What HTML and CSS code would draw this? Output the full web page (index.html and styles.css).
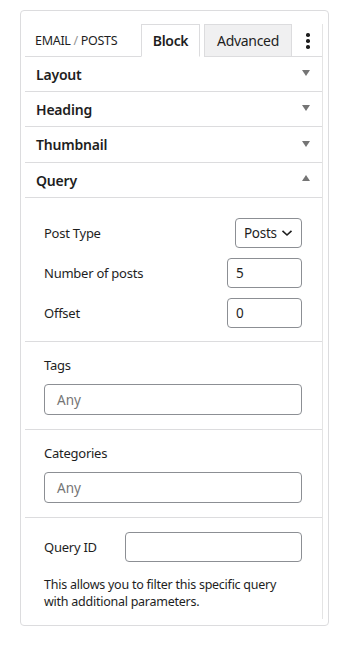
FILE: index.html
```html
<!DOCTYPE html>
<html>
<head>
<meta charset="utf-8">
<link rel="stylesheet" href="styles.css">
</head>
<body>
<div class="card">
  <div class="panel">
    <div class="tabs">
      <div class="crumb">EMAIL <span class="sep">/</span> POSTS</div>
      <div class="tab active">Block</div>
      <div class="tab">Advanced</div>
      <div class="kebab"><span></span><span></span><span></span></div>
    </div>
    <div class="section-head"><span>Layout</span><span class="arrow down"></span></div>
    <div class="section-head"><span>Heading</span><span class="arrow down"></span></div>
    <div class="section-head"><span>Thumbnail</span><span class="arrow down"></span></div>
    <div class="section-head"><span>Query</span><span class="arrow up"></span></div>
    <div class="group rows">
      <div class="row">
        <span class="label">Post Type</span>
        <div class="select"><span>Posts</span><svg width="12" height="8" viewBox="0 0 12 8"><path d="M1.5 1.8 L6 6 L10.5 1.8" fill="none" stroke="#1e1e1e" stroke-width="1.6"/></svg></div>
      </div>
      <div class="row">
        <span class="label">Number of posts</span>
        <div class="input small">5</div>
      </div>
      <div class="row">
        <span class="label">Offset</span>
        <div class="input small">0</div>
      </div>
    </div>
    <div class="group stack">
      <span class="label">Tags</span>
      <div class="input wide placeholder">Any</div>
    </div>
    <div class="group stack">
      <span class="label">Categories</span>
      <div class="input wide placeholder">Any</div>
    </div>
    <div class="group last">
      <div class="row qid">
        <span class="label qlabel">Query ID</span>
        <div class="input qinput"></div>
      </div>
      <p class="help">This allows you to filter this specific query with additional parameters.</p>
    </div>
  </div>
</div>
</body>
</html>
```
FILE: styles.css
```css
* { box-sizing: border-box; }
body {
  margin: 0;
  background: #fff;
  font-family: "Noto Sans", "Open Sans", sans-serif;
  color: #1e1e1e;
}
.card {
  margin: 10px 0 0 20px;
  width: 309px;
  height: 616px;
  border: 1px solid #dcdcde;
  border-radius: 4px;
  padding: 13px 5px 6px 4px;
}
.panel {
  height: 100%;
  border-right: 1px solid #e4e4e4;
}
.tabs {
  display: flex;
  align-items: flex-end;
  height: 33px;
  position: relative;
}
.crumb {
  font-size: 12.5px;
  width: 116px;
  height: 100%;
  padding: 8px 0 0 10px;
  border-bottom: 1px solid #dcdcde;
  letter-spacing: -0.3px;
}
.crumb .sep { color: #949494; }
.tab {
  height: 100%;
  font-size: 14px;
  padding-top: 6px;
  text-align: center;
  border: 1px solid #dcdcde;
  letter-spacing: -0.3px;
}
.tab.active {
  width: 59px;
  font-weight: 600;
  border-bottom-color: #fff;
  background: #fff;
}
.tab:not(.active) {
  width: 88px;
  margin-left: 4px;
  background: #f0f0f1;
}
.kebab {
  flex: 1;
  height: 100%;
  border-bottom: 1px solid #dcdcde;
  display: flex;
  flex-direction: column;
  align-items: center;
  gap: 2.5px;
  padding-top: 9px;
  padding-left: 2px;
}
.kebab span {
  width: 3.5px;
  height: 3.5px;
  border-radius: 50%;
  background: #1e1e1e;
}
.section-head {
  height: 35px;
  border-bottom: 1px solid #dcdcde;
  display: flex;
  align-items: center;
  justify-content: space-between;
  padding: 0 12px 0 11px;
  font-size: 14px;
  font-weight: 600;
  letter-spacing: -0.2px;
}
.section-head:nth-of-type(4) { height: 36px; }
.arrow {
  width: 0;
  height: 0;
  border-left: 4.5px solid transparent;
  border-right: 4.5px solid transparent;
}
.arrow.down { border-top: 6px solid #757575; margin-top: -2px; }
.arrow.up { border-bottom: 6px solid #757575; margin-top: -4px; }
.label {
  font-size: 13px;
  letter-spacing: -0.25px;
}
.group {
  border-bottom: 1px solid #dcdcde;
  padding: 0 20px 0 19px;
}
.rows {
  padding-top: 20px;
  padding-bottom: 13px;
  display: flex;
  flex-direction: column;
  gap: 10px;
}
.row {
  display: flex;
  align-items: center;
  justify-content: space-between;
}
.select {
  width: 67px;
  height: 30px;
  border: 1px solid #8c8f94;
  border-radius: 4px;
  display: flex;
  align-items: center;
  gap: 4px;
  padding-left: 8px;
  font-size: 13.5px;
  letter-spacing: -0.3px;
}
.input {
  height: 30px;
  border: 1px solid #8c8f94;
  border-radius: 4px;
  font-size: 13.5px;
  display: flex;
  align-items: center;
  padding-left: 8px;
}
.input.small { width: 75px; }
.stack {
  padding-top: 14px;
  padding-bottom: 14px;
  display: flex;
  flex-direction: column;
  gap: 10px;
}
.input.wide {
  height: 31px;
  padding-left: 12px;
}
.placeholder { color: #757575; }
.last {
  border-bottom: none;
  padding-top: 14px;
}
.qid { justify-content: flex-start; }
.qlabel { width: 81px; }
.qinput { flex: 1; height: 30px; }
.help {
  margin: 14px 0 0;
  font-size: 12.5px;
  line-height: 17px;
  letter-spacing: -0.25px;
}
```
